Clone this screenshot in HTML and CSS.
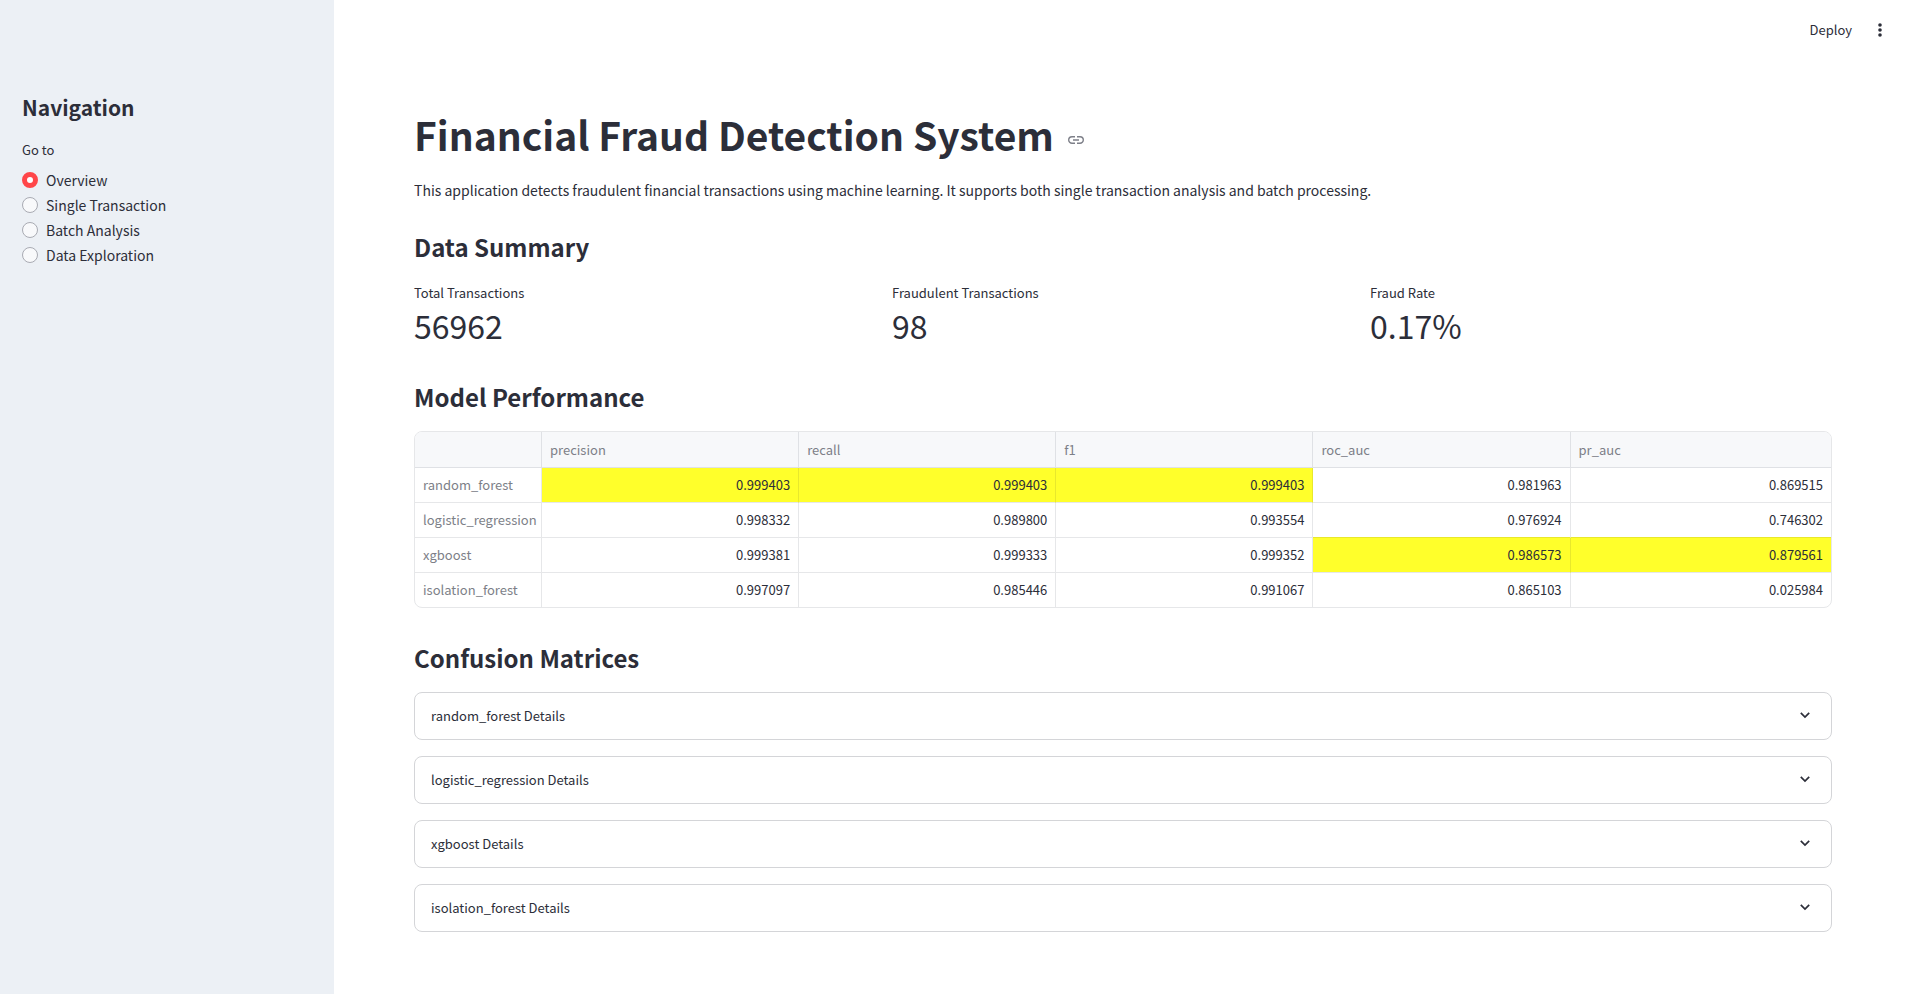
FILE: index.html
```html
<!DOCTYPE html>
<html lang="en">
<head>
<meta charset="utf-8">
<title>Financial Fraud Detection System</title>
<link rel="stylesheet" href="styles.css">
</head>
<body>
<div class="app">
  <aside class="sidebar">
    <h2 class="nav-title">Navigation</h2>
    <fieldset class="nav">
      <legend class="nav-legend">Go to</legend>
      <label class="option"><input class="radio" type="radio" name="page" checked>Overview</label>
      <label class="option"><input class="radio" type="radio" name="page">Single Transaction</label>
      <label class="option"><input class="radio" type="radio" name="page">Batch Analysis</label>
      <label class="option"><input class="radio" type="radio" name="page">Data Exploration</label>
    </fieldset>
  </aside>
  <div class="page">
    <header class="toolbar">
      <button class="deploy" type="button">Deploy</button>
      <button class="menu" type="button" aria-label="Main menu">
        <svg width="20" height="20" viewBox="0 0 20 20" fill="currentColor"><circle cx="10" cy="5" r="1.8"/><circle cx="10" cy="10" r="1.8"/><circle cx="10" cy="15" r="1.8"/></svg>
      </button>
    </header>
    <main class="content">
      <div class="title-row">
        <h1 class="title">Financial Fraud Detection System</h1>
        <a class="anchor" href="#" aria-label="Link to heading">
          <svg width="16" height="8" viewBox="0 0 16 8" fill="none" stroke="currentColor" stroke-width="1.4"><path d="M7 .7H4a3.3 3.3 0 0 0 0 6.6h3M9 .7h3a3.3 3.3 0 0 1 0 6.6H9M5 4h6"/></svg>
        </a>
      </div>
      <p class="intro">This application detects fraudulent financial transactions using machine learning. It supports both single transaction analysis and batch processing.</p>

      <h2 class="heading">Data Summary</h2>
      <dl class="metrics">
        <div class="metric"><dt class="metric-label">Total Transactions</dt><dd class="metric-value">56962</dd></div>
        <div class="metric"><dt class="metric-label">Fraudulent Transactions</dt><dd class="metric-value">98</dd></div>
        <div class="metric"><dt class="metric-label">Fraud Rate</dt><dd class="metric-value">0.17%</dd></div>
      </dl>

      <h2 class="heading">Model Performance</h2>
      <div class="table-frame">
        <table class="table">
          <colgroup><col class="col-name"><col class="col-value"><col class="col-value"><col class="col-value"><col class="col-value"><col></colgroup>
          <thead>
            <tr><td></td><th scope="col">precision</th><th scope="col">recall</th><th scope="col">f1</th><th scope="col">roc_auc</th><th scope="col">pr_auc</th></tr>
          </thead>
          <tbody>
            <tr><th scope="row">random_forest</th><td class="best">0.999403</td><td class="best">0.999403</td><td class="best">0.999403</td><td>0.981963</td><td>0.869515</td></tr>
            <tr><th scope="row">logistic_regression</th><td>0.998332</td><td>0.989800</td><td>0.993554</td><td class="over">0.976924</td><td class="over">0.746302</td></tr>
            <tr><th scope="row">xgboost</th><td>0.999381</td><td>0.999333</td><td>0.999352</td><td class="best">0.986573</td><td class="best">0.879561</td></tr>
            <tr><th scope="row">isolation_forest</th><td>0.997097</td><td>0.985446</td><td>0.991067</td><td>0.865103</td><td>0.025984</td></tr>
          </tbody>
        </table>
      </div>

      <h2 class="heading">Confusion Matrices</h2>
      <div class="expanders">
        <details class="expander"><summary class="summary">random_forest Details<svg class="chevron" width="10" height="10" viewBox="0 0 10 10" fill="none" stroke="currentColor" stroke-width="1.7"><path d="M.8 1.8 5 6 9.2 1.8"/></svg></summary></details>
        <details class="expander"><summary class="summary">logistic_regression Details<svg class="chevron" width="10" height="10" viewBox="0 0 10 10" fill="none" stroke="currentColor" stroke-width="1.7"><path d="M.8 1.8 5 6 9.2 1.8"/></svg></summary></details>
        <details class="expander"><summary class="summary">xgboost Details<svg class="chevron" width="10" height="10" viewBox="0 0 10 10" fill="none" stroke="currentColor" stroke-width="1.7"><path d="M.8 1.8 5 6 9.2 1.8"/></svg></summary></details>
        <details class="expander"><summary class="summary">isolation_forest Details<svg class="chevron" width="10" height="10" viewBox="0 0 10 10" fill="none" stroke="currentColor" stroke-width="1.7"><path d="M.8 1.8 5 6 9.2 1.8"/></svg></summary></details>
      </div>
    </main>
  </div>
</div>
</body>
</html>
```
FILE: styles.css
```css
* { box-sizing: border-box; }

body {
  margin: 0;
  color: #2c2e39;
  background: #fff;
  font: 14px/24px "Source Sans Pro", "Noto Sans CJK SC", sans-serif;
}

h1, h2, p, dl, dd { margin: 0; }

button {
  padding: 0;
  border: 0;
  background: none;
  color: inherit;
  font: inherit;
  cursor: pointer;
}

.app { display: flex; min-height: 100vh; }

.sidebar {
  flex: 0 0 334px;
  padding: 91px 22px 0;
  background: #ecf0f5;
}

.nav-title { font-size: 21px; line-height: 32px; font-weight: 700; }

.nav { margin: 15px 0 0; padding: 0; border: 0; }
.nav-legend { padding: 0; margin-bottom: 5px; font-size: 13px; }

.option { display: flex; align-items: center; gap: 8px; height: 25px; }

.radio {
  appearance: none;
  width: 16px;
  height: 16px;
  margin: 0;
  border: 1px solid #a9abb3;
  border-radius: 50%;
  background: #f8f9fb;
}
.radio:checked { border: 5px solid #ff4649; background: #fff; }

.page { flex: 1; min-width: 0; }

.toolbar {
  display: flex;
  justify-content: flex-end;
  align-items: center;
  gap: 18px;
  height: 60px;
  padding-right: 28px;
}
.deploy { font-size: 13px; }
.menu { display: flex; }

.content { padding: 46px 86px 60px 80px; }

.title-row { display: flex; align-items: center; gap: 14px; }
.title { font-size: 39px; line-height: 56px; font-weight: 700; }
.anchor { display: flex; padding-top: 12px; color: #7d7f88; }

.intro { margin-top: 16px; }

.heading { font-size: 24px; line-height: 36px; font-weight: 700; }
.intro + .heading { margin-top: 27px; }

.metrics {
  display: grid;
  grid-template-columns: repeat(3, 1fr);
  gap: 16px;
  margin: 16px 0 34px;
}
.metric-label { font-size: 13px; }
.metric-value { font-size: 32px; line-height: 40px; }

.table-frame {
  margin: 16px 0 32px;
  border: 1px solid #e6e7e9;
  border-radius: 8px;
  overflow: hidden;
}

.table {
  width: 100%;
  table-layout: fixed;
  border-collapse: separate;
  border-spacing: 0;
  font-size: 13px;
  line-height: 20px;
}
.col-name { width: 127px; }
.col-value { width: 18.16%; }
.table th, .table td {
  height: 35px;
  padding: 0 8px;
  border: solid #e6e7e9;
  border-width: 0 1px 1px 0;
  font-weight: 400;
}
.table th { color: #7d7f88; text-align: left; }
.table td { text-align: right; }
.table thead th, .table thead td { height: 36px; background: #f7f8fa; border-color: #dfe1e5; }
.table tr > :last-child { border-right: 0; }
.table tbody tr:last-child > * { height: 34px; border-bottom: 0; }
.table td.best { background: #ffff2b; border-right-color: #e8e82c; }
.table td.over { border-bottom-color: #e8e82c; }

.expanders { display: grid; gap: 16px; margin-top: 16px; }
.expander { border: 1px solid #d4d5d8; border-radius: 8px; }
.summary {
  display: flex;
  justify-content: space-between;
  align-items: center;
  height: 46px;
  padding: 0 21px 0 16px;
  font-size: 13px;
  cursor: pointer;
  list-style: none;
}
```
